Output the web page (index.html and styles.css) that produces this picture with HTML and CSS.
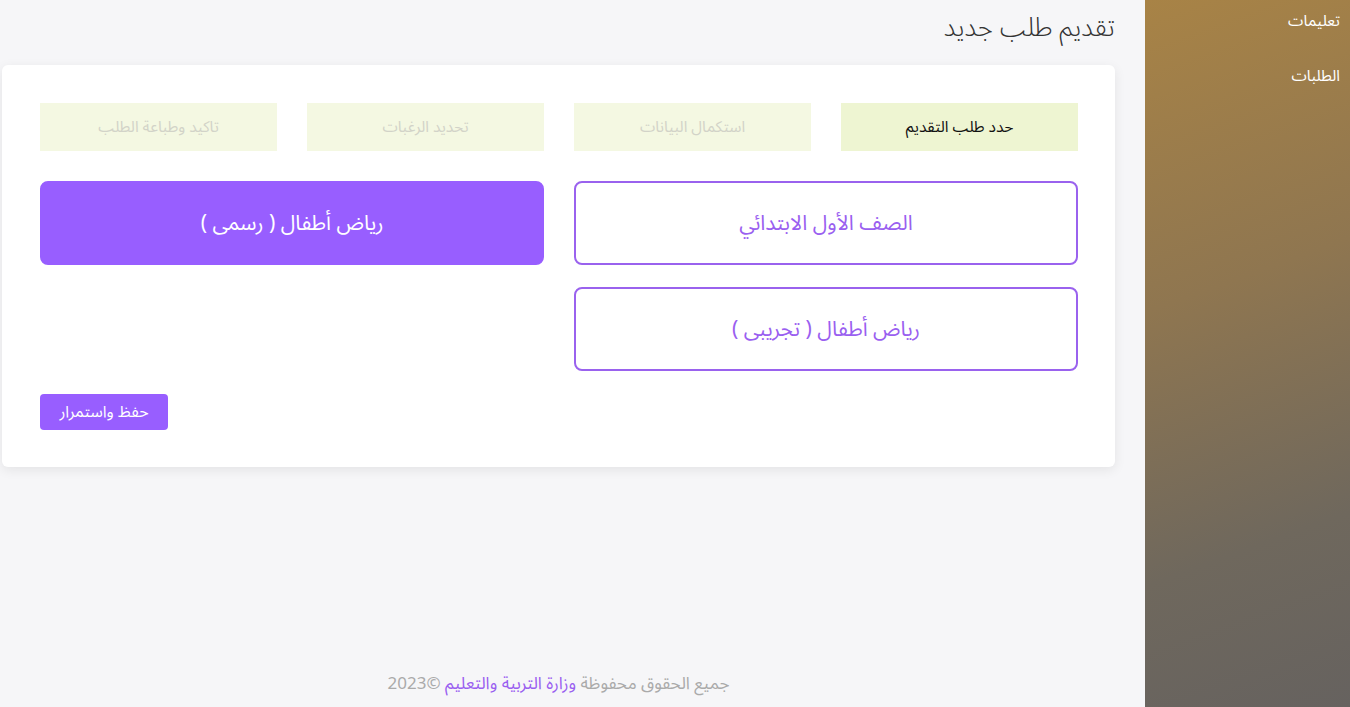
FILE: index.html
```html
<!DOCTYPE html>
<html lang="ar" dir="rtl">
<head>
<meta charset="utf-8">
<title>تقديم طلب جديد</title>
<link rel="stylesheet" href="styles.css">
</head>
<body>
<div class="layout">
  <aside class="sidebar">
    <a class="side-link" href="#">تعليمات</a>
    <a class="side-link" href="#">الطلبات</a>
  </aside>
  <main class="main">
    <h1 class="page-title">تقديم طلب جديد</h1>
    <section class="card">
      <div class="steps">
        <div class="step active">حدد طلب التقديم</div>
        <div class="step">استكمال البيانات</div>
        <div class="step">تحديد الرغبات</div>
        <div class="step">تاكيد وطباعة الطلب</div>
      </div>
      <div class="choices">
        <div class="choice">الصف الأول الابتدائي</div>
        <div class="choice selected">رياض أطفال ( رسمى )</div>
        <div class="choice">رياض أطفال ( تجريبى )</div>
      </div>
      <div class="actions">
        <button class="btn">حفظ واستمرار</button>
      </div>
    </section>
    <footer class="footer">جميع الحقوق محفوظة <a href="#" class="footer-link">وزارة التربية والتعليم</a> ©2023</footer>
  </main>
</div>
</body>
</html>
```
FILE: styles.css
```css
* { box-sizing: border-box; }
html, body { margin: 0; padding: 0; }
body {
  font-family: "Noto Sans Arabic", "DejaVu Sans", "Noto Sans", sans-serif;
  background: #f6f6f8;
  color: #333;
}
.layout {
  display: flex;
  min-height: 100vh;
}
.sidebar {
  width: 205px;
  flex-shrink: 0;
  background: linear-gradient(160deg, #a88346 0%, #8f7650 40%, #6f685d 75%, #66625f 100%);
  display: flex;
  flex-direction: column;
  padding: 10px 10px 0 0;
  gap: 33px;
}
.side-link {
  color: #fff;
  text-decoration: none;
  font-size: 15.5px;
  line-height: 22px;
}
.main {
  flex: 1;
  display: flex;
  flex-direction: column;
  padding: 0 30px 0 2px;
  min-height: 100vh;
}
.page-title {
  margin: 0;
  padding-top: 9px;
  height: 65px;
  font-size: 26px;
  line-height: 38px;
  font-weight: 300;
  color: #333;
}
.card {
  background: #fff;
  border-radius: 6px;
  box-shadow: 0 3px 12px rgba(0, 0, 0, 0.08);
  padding: 38px 37px 37px 38px;
}
.steps {
  display: grid;
  grid-template-columns: repeat(4, 1fr);
  gap: 30px;
}
.step {
  height: 48px;
  display: flex;
  align-items: center;
  justify-content: center;
  background: #f4f8e2;
  color: #d2d3c8;
  font-size: 15.5px;
}
.step.active {
  background: #eef5d2;
  color: #111;
}
.choices {
  margin-top: 30px;
  display: grid;
  grid-template-columns: 1fr 1fr;
  column-gap: 30px;
  row-gap: 22px;
}
.choice {
  height: 84px;
  border: 2px solid #9a62ee;
  border-radius: 8px;
  display: flex;
  align-items: center;
  justify-content: center;
  color: #9a5ff0;
  font-size: 21px;
}
.choice.selected {
  background: #985eff;
  border-color: #985eff;
  color: #fff;
}
.actions {
  margin-top: 23px;
  display: flex;
  justify-content: flex-end;
}
.btn {
  width: 128px;
  height: 36px;
  border: none;
  border-radius: 4px;
  background: #985eff;
  color: #fff;
  font-family: inherit;
  font-size: 16px;
  cursor: pointer;
}
.footer {
  margin-top: auto;
  text-align: center;
  color: #aaa;
  font-size: 17px;
  padding-bottom: 11px;
  line-height: 24px;
}
.footer-link {
  color: #9a5ff0;
  text-decoration: none;
}
```
